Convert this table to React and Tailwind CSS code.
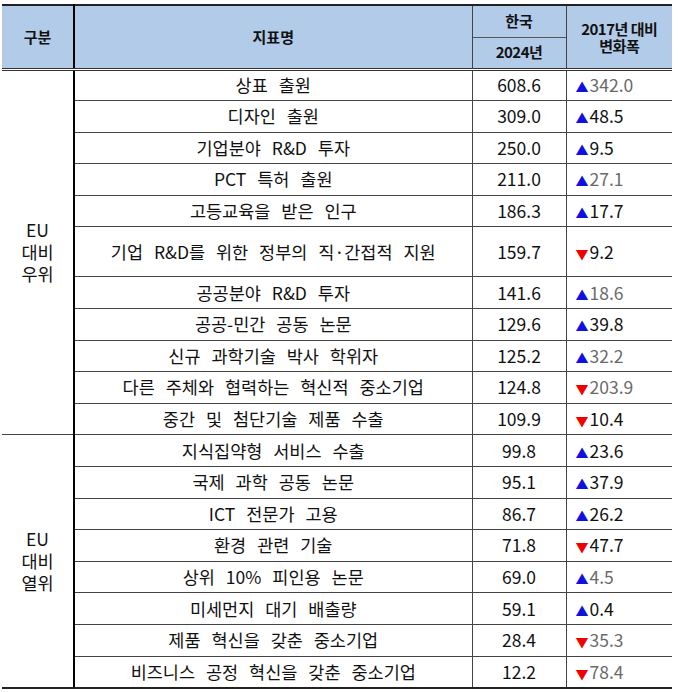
const rowsA = [
  ['상표 출원', '608.6', 'up', '342.0', true],
  ['디자인 출원', '309.0', 'up', '48.5', false],
  ['기업분야 R&D 투자', '250.0', 'up', '9.5', false],
  ['PCT 특허 출원', '211.0', 'up', '27.1', true],
  ['고등교육을 받은 인구', '186.3', 'up', '17.7', false],
  ['기업 R&D를 위한 정부의 직·간접적 지원', '159.7', 'down', '9.2', false, true],
  ['공공분야 R&D 투자', '141.6', 'up', '18.6', true],
  ['공공-민간 공동 논문', '129.6', 'up', '39.8', false],
  ['신규 과학기술 박사 학위자', '125.2', 'up', '32.2', true],
  ['다른 주체와 협력하는 혁신적 중소기업', '124.8', 'down', '203.9', true],
  ['중간 및 첨단기술 제품 수출', '109.9', 'down', '10.4', false],
];

const rowsB = [
  ['지식집약형 서비스 수출', '99.8', 'up', '23.6', false],
  ['국제 과학 공동 논문', '95.1', 'up', '37.9', false],
  ['ICT 전문가 고용', '86.7', 'up', '26.2', false],
  ['환경 관련 기술', '71.8', 'down', '47.7', false],
  ['상위 10% 피인용 논문', '69.0', 'up', '4.5', true],
  ['미세먼지 대기 배출량', '59.1', 'up', '0.4', false],
  ['제품 혁신을 갖춘 중소기업', '28.4', 'down', '35.3', true],
  ['비즈니스 공정 혁신을 갖춘 중소기업', '12.2', 'down', '78.4', true],
];

function Row({ row, first, group, groupLabel, span, last }) {
  const [name, value, dir, change, gray, tall] = row;
  const bottom = last ? 'border-b-2 border-b-[#222]' : 'border-b border-b-[#444]';
  return (
    <tr className={tall ? 'h-[50px]' : 'h-[31.6px]'}>
      {first && (
        <td
          rowSpan={span}
          className={`border-r-2 border-r-black text-center align-middle leading-[22px] ${group === 'b' ? 'border-b-2 border-b-[#222]' : 'border-b border-b-[#444]'}`}
        >
          {groupLabel.map((l) => (
            <div key={l}>{l}</div>
          ))}
        </td>
      )}
      <td className={`border-r border-r-[#444] text-center [word-spacing:7px] ${bottom}`}>{name}</td>
      <td className={`border-r border-r-[#444] text-center ${bottom}`}>{value}</td>
      <td className={`pl-[9px] ${bottom}`}>
        <span className={dir === 'up' ? 'text-[#1010e0] text-[13px] mr-[1px]' : 'text-[#f00000] text-[13px] mr-[1px]'}>
          {dir === 'up' ? '▲' : '▼'}
        </span>
        <span className={gray ? 'text-[#6a6a6a]' : 'text-[#111]'}>{change}</span>
      </td>
    </tr>
  );
}

export default function App() {
  return (
    <div className="w-[680px] h-[692px] bg-white pt-[4px] pl-[2px]">
      <table
        className="w-[670px] border-collapse table-fixed text-[17.5px] text-[#111]"
        style={{ fontFamily: '"Noto Sans CJK KR", "Noto Sans", sans-serif' }}
      >
        <colgroup>
          <col className="w-[72px]" />
          <col className="w-[398px]" />
          <col className="w-[94px]" />
          <col className="w-[106px]" />
        </colgroup>
        <thead>
          <tr className="h-[32px] bg-[#b2cbe8] border-t-2 border-t-[#222]">
            <th rowSpan={2} className="border-r-2 border-r-black border-b-[3px] border-double border-b-[#333] text-[15px] font-bold">
              구분
            </th>
            <th rowSpan={2} className="border-r border-r-[#444] border-b-[3px] border-double border-b-[#333] text-[15px] font-bold">
              지표명
            </th>
            <th className="border-r border-r-[#444] border-b border-b-[#555] text-[15px] font-bold">한국</th>
            <th rowSpan={2} className="border-b-[3px] border-double border-b-[#333] text-[15px] font-bold leading-[17px] tracking-[-0.5px]">
              2017년 대비
              <br />
              변화폭
            </th>
          </tr>
          <tr className="h-[32px] bg-[#b2cbe8]">
            <th className="border-r border-r-[#444] border-b-[3px] border-double border-b-[#333] text-[15px] font-bold tracking-[-0.5px]">
              2024년
            </th>
          </tr>
        </thead>
        <tbody>
          {rowsA.map((r, i) => (
            <Row key={r[0]} row={r} first={i === 0} group="a" groupLabel={['EU', '대비', '우위']} span={rowsA.length} />
          ))}
          {rowsB.map((r, i) => (
            <Row
              key={r[0]}
              row={r}
              first={i === 0}
              group="b"
              groupLabel={['EU', '대비', '열위']}
              span={rowsB.length}
              last={i === rowsB.length - 1}
            />
          ))}
        </tbody>
      </table>
    </div>
  );
}
